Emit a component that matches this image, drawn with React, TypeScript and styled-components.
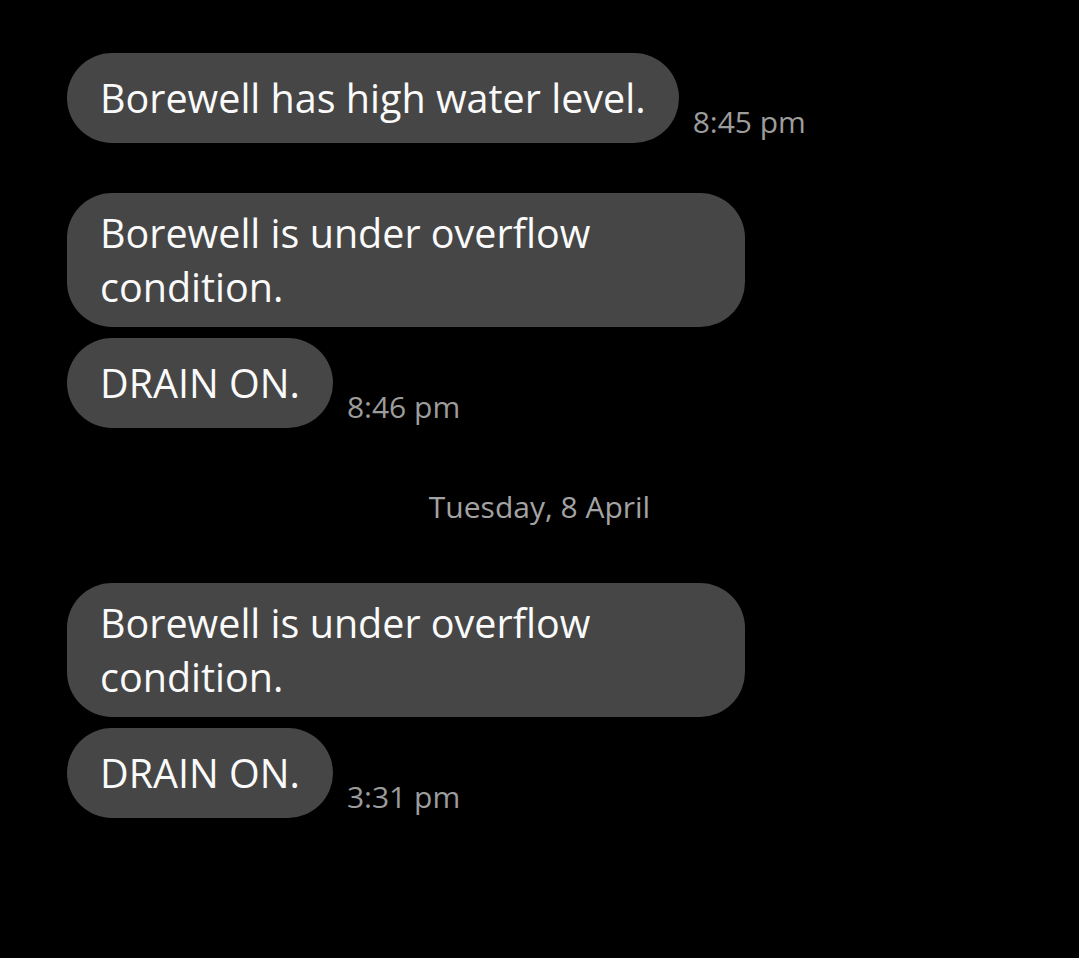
import styled, { createGlobalStyle } from 'styled-components'

const GlobalStyle = createGlobalStyle`
  html, body {
    margin: 0;
    padding: 0;
    background: #000;
  }
  body {
    font-family: 'Open Sans', Roboto, sans-serif;
    -webkit-font-smoothing: antialiased;
  }
`

const Thread = styled.div`
  display: flex;
  flex-direction: column;
  padding: 53px 0 0 67px;
  min-height: 958px;
  box-sizing: border-box;
  background: #000;
`

const Group = styled.div<{ $gapTop: number }>`
  display: flex;
  flex-direction: column;
  gap: 11px;
  margin-top: ${(p) => p.$gapTop}px;
`

const Row = styled.div`
  display: flex;
  align-items: flex-end;
  gap: 14px;
`

const Bubble = styled.div`
  box-sizing: border-box;
  max-width: 678px;
  min-height: 90px;
  display: flex;
  align-items: center;
  padding: 13px 33px;
  background: #464646;
  color: #fafafa;
  border-radius: 45px;
  font-size: 39.5px;
  line-height: 54px;
`

const Time = styled.span`
  color: #9c9c9c;
  font-size: 30px;
  line-height: 34px;
  margin-bottom: 4px;
  white-space: nowrap;
`

const DateLabel = styled.div`
  margin: 62px 67px 0 0;
  text-align: center;
  color: #a3a3a3;
  font-size: 30px;
  line-height: 34px;
`

type Message = { text: string; time?: string }

const groups: { gapTop: number; messages: Message[] }[] = [
  {
    gapTop: 0,
    messages: [{ text: 'Borewell has high water level.', time: '8:45 pm' }],
  },
  {
    gapTop: 50,
    messages: [
      { text: 'Borewell is under overflow condition.' },
      { text: 'DRAIN ON.', time: '8:46 pm' },
    ],
  },
]

const later: Message[] = [
  { text: 'Borewell is under overflow condition.' },
  { text: 'DRAIN ON.', time: '3:31 pm' },
]

const MessageRow = ({ message }: { message: Message }) => (
  <Row>
    <Bubble>{message.text}</Bubble>
    {message.time && <Time>{message.time}</Time>}
  </Row>
)

export default function App() {
  return (
    <>
      <GlobalStyle />
      <Thread>
        {groups.map((group, i) => (
          <Group key={i} $gapTop={group.gapTop}>
            {group.messages.map((m, j) => (
              <MessageRow key={j} message={m} />
            ))}
          </Group>
        ))}
        <DateLabel>Tuesday, 8 April</DateLabel>
        <Group $gapTop={59}>
          {later.map((m, j) => (
            <MessageRow key={j} message={m} />
          ))}
        </Group>
      </Thread>
    </>
  )
}
